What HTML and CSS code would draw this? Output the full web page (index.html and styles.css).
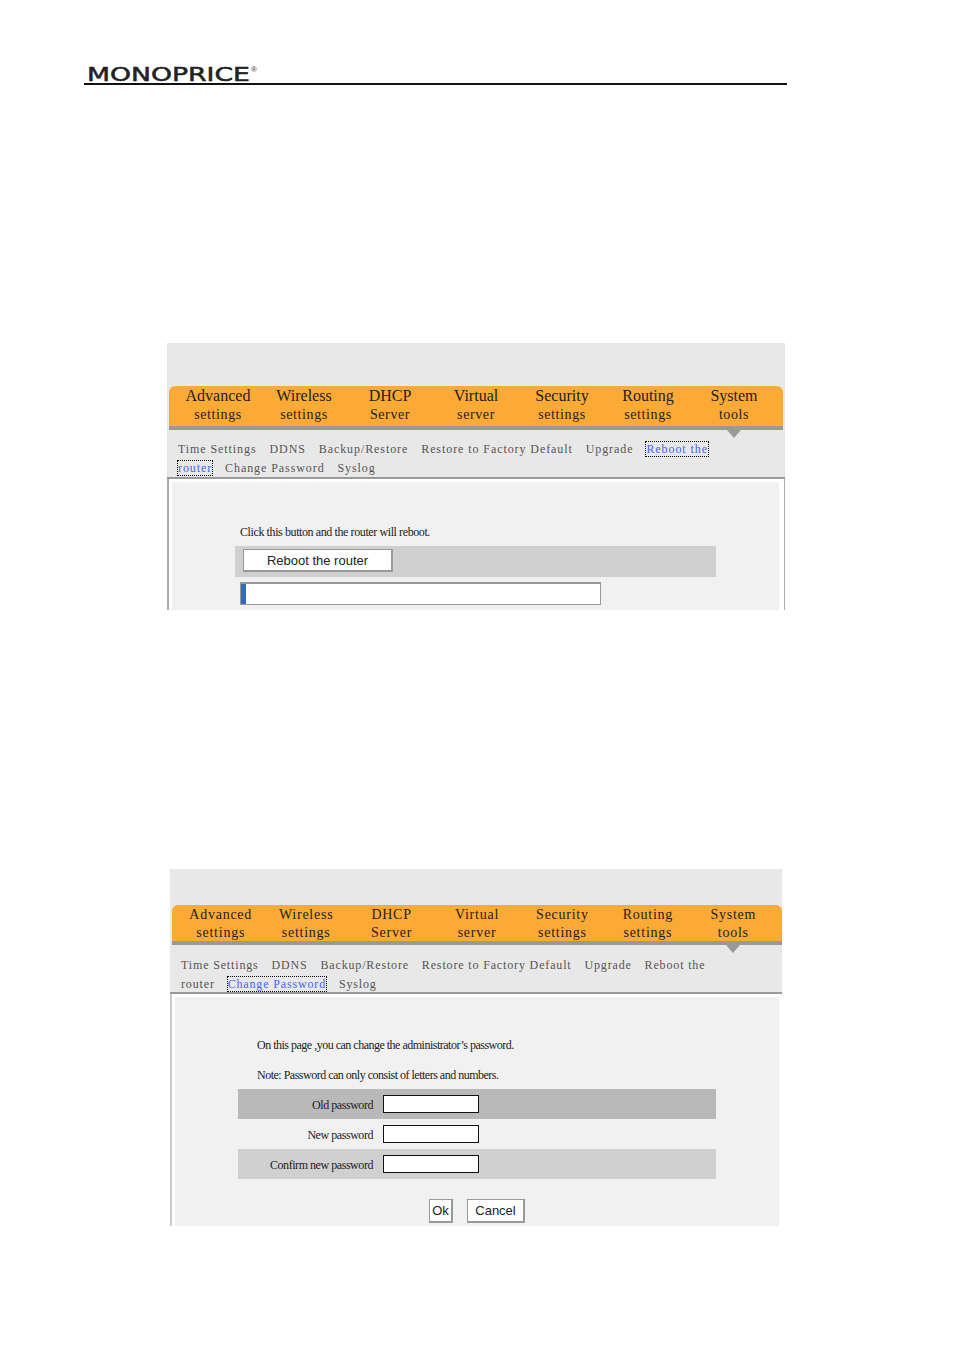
FILE: index.html
```html
<!DOCTYPE html>
<html lang="en">
<head>
    <meta charset="UTF-8">
    <meta name="viewport" content="width=device-width, initial-scale=1.0">
    <title>Monoprice router manual</title>
    <link rel="stylesheet" href="styles.css">
</head>
<body>
    <header class="doc-header">
        <svg class="logo" width="172" height="26" viewBox="0 0 172 26" role="img" aria-label="Monoprice">
            <text class="logo-word" x="0" y="20" textLength="163" lengthAdjust="spacingAndGlyphs">MONOPRICE</text>
            <text class="logo-mark" x="164" y="11">®</text>
        </svg>
    </header>

    <!-- Reboot page -->
    <section class="panel panel-reboot">
        <nav class="menu">
            <a>Advanced<br><small>settings</small></a>
            <a>Wireless<br><small>settings</small></a>
            <a>DHCP<br><small>Server</small></a>
            <a>Virtual<br><small>server</small></a>
            <a>Security<br><small>settings</small></a>
            <a>Routing<br><small>settings</small></a>
            <a>System<br><small>tools</small></a>
        </nav>
        <div class="submenu">
            <a>Time Settings</a>
            <a>DDNS</a>
            <a>Backup/Restore</a>
            <a>Restore to Factory Default</a>
            <a>Upgrade</a>
            <a class="current">Reboot the</a><br>
            <a class="current">router</a>
            <a>Change Password</a>
            <a>Syslog</a>
        </div>
        <div class="main">
            <div class="content">
                <p class="note">Click this button and the router will reboot.</p>
                <div class="row row-light">
                    <button class="btn btn-reboot" type="button">Reboot the router</button>
                </div>
                <div class="progress"><div class="progress-fill"></div></div>
            </div>
        </div>
    </section>

    <!-- Change password page -->
    <section class="panel panel-password">
        <nav class="menu">
            <a>Advanced<br>settings</a>
            <a>Wireless<br>settings</a>
            <a>DHCP<br>Server</a>
            <a>Virtual<br>server</a>
            <a>Security<br>settings</a>
            <a>Routing<br>settings</a>
            <a>System<br>tools</a>
        </nav>
        <div class="submenu">
            <a>Time Settings</a>
            <a>DDNS</a>
            <a>Backup/Restore</a>
            <a>Restore to Factory Default</a>
            <a>Upgrade</a>
            <a>Reboot the</a><br>
            <a>router</a>
            <a class="current">Change Password</a>
            <a>Syslog</a>
        </div>
        <div class="main">
            <div class="content">
                <p class="note">On this page ,you can change the administrator’s password.</p>
                <p class="note">Note: Password can only consist of letters and numbers.</p>
                <form class="pass-form">
                    <div class="row row-dark">
                        <label class="pass-label">Old password</label>
                        <input class="pass-input" type="password">
                    </div>
                    <div class="row">
                        <label class="pass-label">New password</label>
                        <input class="pass-input" type="password">
                    </div>
                    <div class="row row-light">
                        <label class="pass-label">Confirm new password</label>
                        <input class="pass-input" type="password">
                    </div>
                    <div class="form-actions">
                        <button class="btn btn-ok" type="button">Ok</button>
                        <button class="btn btn-cancel" type="button">Cancel</button>
                    </div>
                </form>
            </div>
        </div>
    </section>
</body>
</html>
```

FILE: styles.css
```css
body {
    margin: 0;
    background: #fff;
    font-family: "Liberation Serif", "Times New Roman", serif;
}
.doc-header {
    box-sizing: border-box;
    width: 703px;
    height: 85px;
    margin-left: 84px;
    padding: 61px 0 0 3px;
    border-bottom: 2px solid #111;
}
.logo {
    display: block;
    overflow: visible;
}
.logo-word {
    font-family: "DejaVu Sans", sans-serif;
    font-size: 19px;
    stroke: #222;
    stroke-width: 0.5px;
    fill: #222;
}
.logo-mark {
    font-family: "Liberation Sans", sans-serif;
    font-size: 8px;
    font-weight: 700;
    fill: #666;
}

/* panels */
.panel {
    box-sizing: border-box;
    background: #e8e8e8;
}
.panel-reboot {
    width: 618px;
    height: 267px;
    margin: 258px 0 0 167px;
    padding-top: 43px;
}
.panel-password {
    width: 612px;
    height: 357px;
    margin: 259px 0 0 170px;
    padding-top: 36px;
}

/* orange menu */
.menu {
    position: relative;
    display: grid;
    grid-template-columns: repeat(7, 1fr);
    margin: 0 2px;
    padding: 1px 6px 0;
    background: #fbaa35;
    border-bottom: 4px solid #999;
    border-radius: 6px 6px 0 0;
    color: #222;
    text-align: center;
    font-size: 14px;
    letter-spacing: 0.75px;
}
.menu::after {
    content: "";
    position: absolute;
    right: 42px;
    bottom: -12px;
    border-style: solid;
    border-width: 8px 7px 0;
    border-color: #999 transparent transparent;
}
.panel-reboot .menu {
    height: 39px;
    font-size: 16px;
    line-height: 18px;
    letter-spacing: 0;
}
.panel-reboot .menu small {
    font-size: 14px;
    letter-spacing: 0.6px;
}
.panel-password .menu {
    height: 35px;
    margin-right: 0;
    line-height: 18px;
}

/* submenu */
.submenu {
    box-sizing: border-box;
    height: 49px;
    padding: 10px 0 0 11px;
    border-bottom: 2px solid #999;
    color: #555;
    font-size: 12px;
    line-height: 19px;
    letter-spacing: 0.92px;
}
.submenu a {
    margin-right: 9px;
}
.submenu .current {
    outline: 1px dotted #000;
    color: #4466ff;
}
.panel-password .submenu {
    padding-top: 11px;
    letter-spacing: 0.85px;
}

/* main area */
.main {
    box-sizing: border-box;
    background: #fff;
    border-left: 2px solid #aaa;
    border-right: 1px solid #aaa;
    padding: 3px 5px 0 3px;
}
.panel-password .main {
    border-left-color: #ccc;
    border-right: 0;
    padding-right: 3px;
}
.content {
    box-sizing: border-box;
    background: #f1f1f1;
    color: #222;
    padding-left: 63px;
}
.panel-reboot .content {
    height: 128px;
    padding-top: 41px;
}
.panel-password .content {
    height: 229px;
    padding-top: 39px;
}
.note {
    margin: 0 0 5px 5px;
    font-size: 12px;
    line-height: 18px;
    letter-spacing: -0.4px;
}
.panel-password .note {
    margin: 0 0 12px 19px;
    letter-spacing: -0.5px;
}
.panel-password .note + .note {
    margin-bottom: 5px;
}

.row {
    box-sizing: border-box;
    display: flex;
    align-items: center;
    width: 478px;
    height: 30px;
}
.row-light {
    background: #d0d0d0;
}
.row-dark {
    background: #b9b9b9;
}
.panel-reboot .row {
    width: 481px;
    height: 31px;
    padding-left: 8px;
}

/* buttons */
.btn {
    box-sizing: border-box;
    height: 24px;
    padding: 0 2px;
    background: #fff;
    border: 1px solid #999;
    border-width: 1px 2px 2px 1px;
    color: #222;
    font-family: "Liberation Sans", Arial, sans-serif;
    font-size: 13px;
}
.btn-reboot {
    width: 150px;
    height: 23px;
    margin-bottom: 2px;
}
.btn-ok {
    width: 24px;
}
.btn-cancel {
    width: 58px;
}
.progress {
    box-sizing: border-box;
    width: 361px;
    height: 23px;
    margin: 5px 0 0 5px;
    background: #fff;
    border: 1px solid #999;
    border-top-width: 2px;
}
.progress-fill {
    width: 5px;
    height: 100%;
    background: #3366cc;
}

/* password form */
.pass-label {
    width: 135px;
    padding-top: 2px;
    text-align: right;
    font-size: 12px;
    letter-spacing: -0.45px;
}
.pass-input {
    box-sizing: border-box;
    width: 96px;
    height: 18px;
    margin-left: 10px;
    padding: 0;
    background: #fff;
    border: 1px solid #111;
    border-radius: 0;
}
.form-actions {
    display: flex;
    gap: 14px;
    margin-top: 20px;
    padding-left: 191px;
}
```
